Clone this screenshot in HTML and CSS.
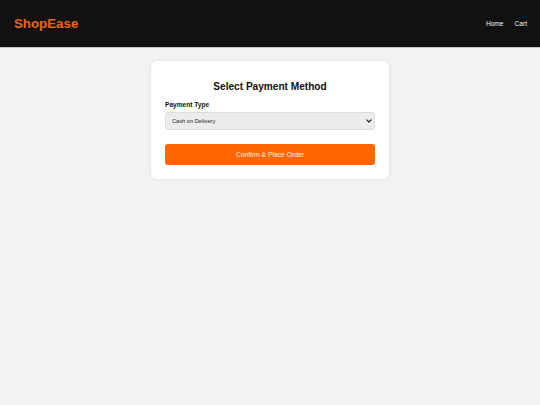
FILE: index.html
```html
<!DOCTYPE html>
<html lang="en">
<head>
<meta charset="utf-8">
<title>ShopEase - Payment</title>
<link rel="stylesheet" href="styles.css">
</head>
<body>
<header class="topbar">
  <div class="logo">ShopEase</div>
  <nav class="nav">
    <a href="#" class="nav-link">Home</a>
    <a href="#" class="nav-link">Cart</a>
  </nav>
</header>
<main class="main">
  <section class="card">
    <h2 class="card-title">Select Payment Method</h2>
    <label class="field-label" for="ptype">Payment Type</label>
    <div class="select-wrap">
      <select id="ptype" class="field-select">
        <option>Cash on Delivery</option>
        <option>Credit Card</option>
        <option>UPI</option>
      </select>
      <svg class="select-arrow" width="6" height="4" viewBox="0 0 6 4" aria-hidden="true">
        <path d="M0.8 0.8 L3 3 L5.2 0.8" fill="none" stroke="#222" stroke-width="1.2" stroke-linecap="round" stroke-linejoin="round"/>
      </svg>
    </div>
    <button class="btn-primary">Confirm &amp; Place Order</button>
  </section>
</main>
</body>
</html>
```
FILE: styles.css
```css
* { box-sizing: border-box; }
html, body { margin: 0; padding: 0; }
body {
  background: #f2f2f2;
  font-family: "Liberation Sans", Arial, sans-serif;
  color: #111;
  height: 405px;
}
.topbar {
  height: 48px;
  background: #111111;
  border-bottom: 1px solid #c8c8c8;
  display: flex;
  align-items: center;
  justify-content: space-between;
  padding: 0 13px 0 14px;
}
.logo {
  color: #ea6611;
  font-weight: bold;
  font-size: 13.3px;
  line-height: 16px;
  margin-top: 1px;
}
.nav {
  display: flex;
  gap: 11px;
  margin-top: 1px;
}
.nav-link {
  color: #f4f4f4;
  text-decoration: none;
  font-size: 6.6px;
  line-height: 8px;
}
.main {
  display: flex;
  justify-content: center;
  padding-top: 13px;
}
.card {
  width: 238px;
  background: #ffffff;
  border-radius: 6px;
  box-shadow: 0 0 4px rgba(0,0,0,0.09);
  padding: 14px;
  display: flex;
  flex-direction: column;
}
.card-title {
  margin: 6px 0 0;
  font-size: 10.1px;
  line-height: 12px;
  font-weight: bold;
  text-align: center;
  color: #111;
}
.field-label {
  margin-top: 7.5px;
  font-size: 6.6px;
  line-height: 8px;
  font-weight: bold;
  color: #111;
}
.select-wrap {
  position: relative;
  margin-top: 3.5px;
}
.field-select {
  display: block;
  appearance: none;
  -webkit-appearance: none;
  height: 18px;
  width: 100%;
  font-family: "Liberation Sans", Arial, sans-serif;
  font-size: 5.7px;
  color: #222;
  background: #ececec;
  border: 1px solid #dddddd;
  border-radius: 3px;
  padding: 0 6px;
}
.select-arrow {
  position: absolute;
  right: 3px;
  top: 7px;
}
.btn-primary {
  margin-top: 14px;
  height: 21px;
  width: 100%;
  background: #ff6600;
  color: #fff4ea;
  border: none;
  border-radius: 3px;
  font-family: "Liberation Sans", Arial, sans-serif;
  font-size: 6.75px;
  cursor: pointer;
}
```
